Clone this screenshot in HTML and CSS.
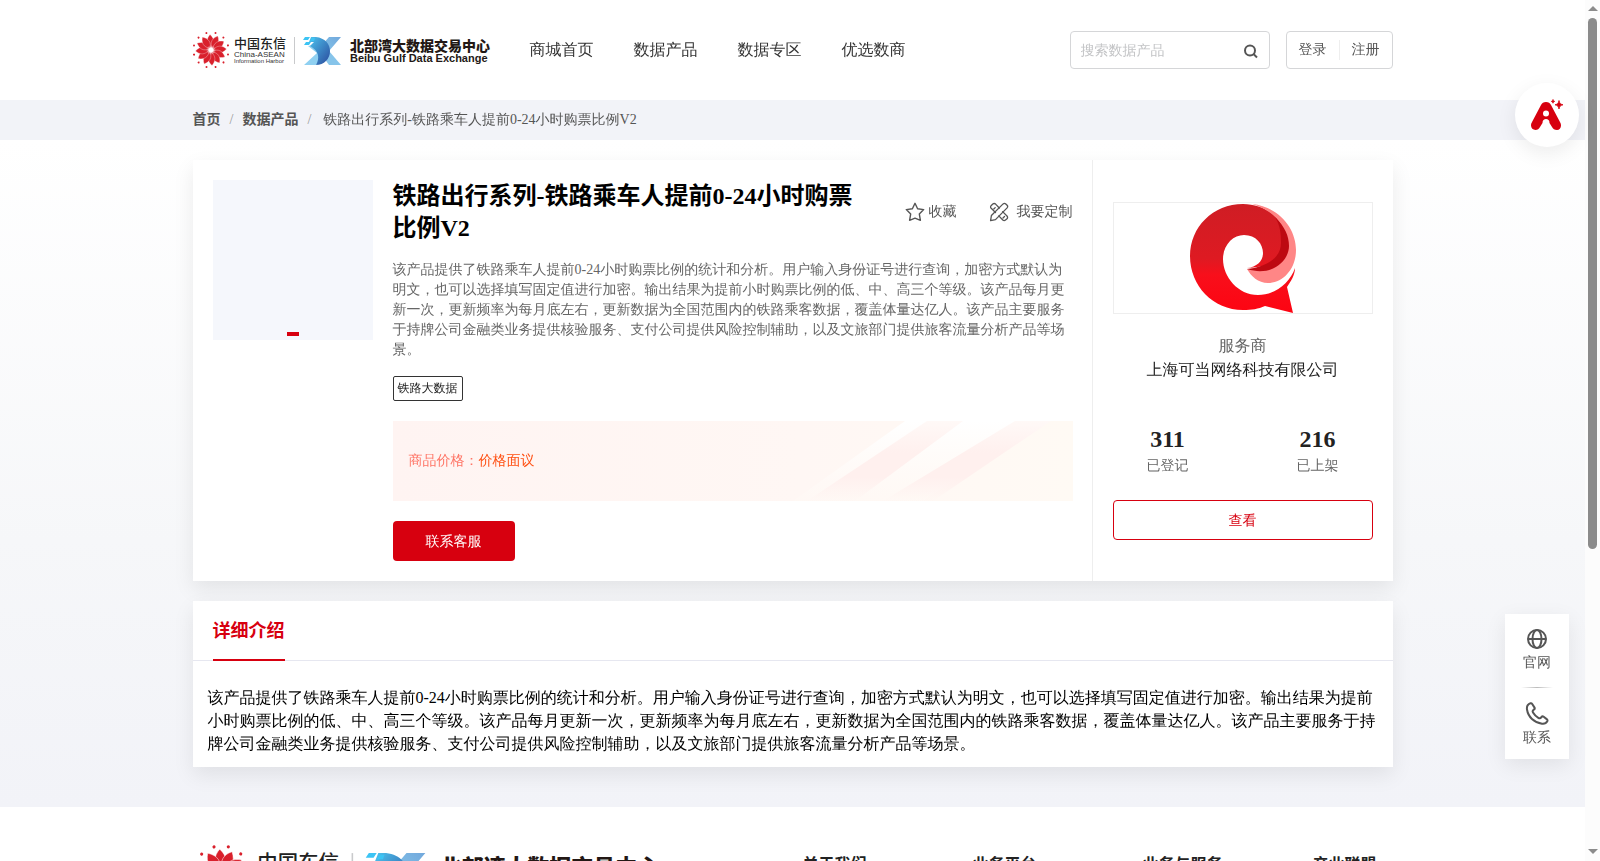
FILE: index.html
```
<!DOCTYPE html>
<html lang="zh-CN">
<head>
<meta charset="utf-8">
<title>铁路出行系列-铁路乘车人提前0-24小时购票比例V2</title>
<link rel="stylesheet" href="styles.css">
</head>
<body>
<svg class="defs" aria-hidden="true">
  <defs>
    <linearGradient id="dx-a" x1="0" y1="0" x2="1" y2="1"><stop offset="0" stop-color="#4cc3ee"/><stop offset="1" stop-color="#2b4a9c"/></linearGradient>
    <linearGradient id="dx-b" x1="0" y1="1" x2="1" y2="0"><stop offset="0" stop-color="#8fd6f2"/><stop offset="1" stop-color="#72a8dc"/></linearGradient>
    <radialGradient id="core"><stop offset="0" stop-color="#fff"/><stop offset="1" stop-color="#fff" stop-opacity="0"/></radialGradient>
    <g id="petal">
      <path d="M0 -2C-5 -6 -5 -11 -1 -15.500C4 -11 4 -6 0 -2Z" fill="#d9202c" stroke="#fff" stroke-width=".3"/>
      <circle cx="4.500" cy="-17" r="1" fill="#d9202c"/>
    </g>
    <symbol id="brand" viewBox="0 0 300 40">
      <g transform="translate(18 20)">
        <use href="#petal"/><use href="#petal" transform="rotate(30)"/><use href="#petal" transform="rotate(60)"/><use href="#petal" transform="rotate(90)"/><use href="#petal" transform="rotate(120)"/><use href="#petal" transform="rotate(150)"/><use href="#petal" transform="rotate(180)"/><use href="#petal" transform="rotate(210)"/><use href="#petal" transform="rotate(240)"/><use href="#petal" transform="rotate(270)"/><use href="#petal" transform="rotate(300)"/><use href="#petal" transform="rotate(330)"/>
        <circle r="5" fill="url(#core)"/>
      </g>
      <text class="brand-cn" x="41" y="18">中国东信</text>
      <text class="brand-en" x="41" y="27">China-ASEAN</text>
      <text class="brand-sub" x="41" y="33">Information Harbor</text>
      <path d="M101.500 7V34" stroke="#c9cacc"/>
      <path d="M148 7H136L129 15L131 21L124 28L121 34H124L136 21Z" fill="url(#dx-b)"/>
      <path d="M136 21L148 35H136L131 28Z" fill="#86c4ea"/>
      <path d="M115 16L124 23L111 35H123L131 25L126 14Z" fill="#8fd0f1"/>
      <path d="M118 7H123C132 8 137 14 137 21C137 29 131 35 123 35C127 28 126 21 117 16L121 12H116Z" fill="url(#dx-a)"/>
      <path d="M112 7H117L115 10H110ZM119 8H122L121 11H117ZM113 12H118L116 15H111Z" fill="#3cc4f4"/>
      <text class="brand-name" x="157" y="21">北部湾大数据交易中心</text>
      <text class="brand-name-en" x="157" y="32">Beibu Gulf Data Exchange</text>
    </symbol>
  </defs>
</svg>

<div class="viewport">
  <header class="header">
    <div class="container header-row">
      <a href="#" class="brand" aria-label="北部湾大数据交易中心"><svg class="brand-logo"><use href="#brand"/></svg></a>
      <nav class="nav">
        <a href="#">商城首页</a><a href="#">数据产品</a><a href="#">数据专区</a><a href="#">优选数商</a>
      </nav>
      <form class="search">
        <input type="search" placeholder="搜索数据产品" aria-label="搜索数据产品">
        <button type="button" aria-label="搜索"><svg width="16" height="16" viewBox="0 0 16 16" fill="none" stroke="#555" stroke-width="2"><circle cx="7" cy="7.500" r="5"/><path d="M10.500 11L14 14.500"/></svg></button>
      </form>
      <div class="account"><a href="#">登录</a><a href="#">注册</a></div>
    </div>
  </header>

  <div class="crumbs">
    <nav class="container crumbs-row" aria-label="面包屑">
      <a href="#">首页</a><span class="slash">/</span><a href="#">数据产品</a><span class="slash">/</span><span class="current">铁路出行系列-铁路乘车人提前0-24小时购票比例V2</span>
    </nav>
  </div>

  <main class="main">
    <section class="container card product">
      <div class="thumb"><i class="thumb-dot"></i></div>
      <div class="info">
        <div class="title-row">
          <h1>铁路出行系列-铁路乘车人提前0-24小时购票比例V2</h1>
          <div class="actions">
            <button type="button" class="fav"><svg width="20" height="20" viewBox="0 0 20 20" fill="none" stroke="#555" stroke-width="1.400" stroke-linejoin="round"><path d="M10 1.300L12.600 6.700L18.700 7.600L14.300 11.900L15.400 18.300L10 16.200L4.600 18.300L5.700 11.900L1.300 7.600L7.400 6.700Z"/></svg>收藏</button>
            <button type="button" class="custom"><svg width="20" height="20" viewBox="0 0 20 20" fill="none" stroke="#555" stroke-width="1.300" stroke-linejoin="round" stroke-linecap="round"><path d="M6.500 10.500L2.200 6.300C1.200 5.200 1.400 4.400 2.300 3.400L3.800 2C4.800 1.200 5.600 1.200 6.600 2.100L10.300 6M13.600 9.600L18 14C18.800 15 18.800 15.800 18 16.700L16.500 18C15.500 18.900 14.700 18.800 13.800 18L9.800 13.900"/><path d="M14.100 1.900C15 1.100 15.900 1.100 16.800 2L18.100 3.300C18.900 4.200 18.900 5 18.100 5.900L6.500 17.600L1.600 18.600L2.400 13.500ZM4.800 7L6.200 5.600M14 16L15.500 14.500"/></svg>我要定制</button>
          </div>
        </div>
        <p class="desc">该产品提供了铁路乘车人提前0-24小时购票比例的统计和分析。用户输入身份证号进行查询，加密方式默认为明文，也可以选择填写固定值进行加密。输出结果为提前小时购票比例的低、中、高三个等级。该产品每月更新一次，更新频率为每月底左右，更新数据为全国范围内的铁路乘客数据，覆盖体量达亿人。该产品主要服务于持牌公司金融类业务提供核验服务、支付公司提供风险控制辅助，以及文旅部门提供旅客流量分析产品等场景。</p>
        <span class="tag">铁路大数据</span>
        <div class="price">
          <svg class="price-art" viewBox="0 0 280 80" preserveAspectRatio="none" aria-hidden="true">
            <defs>
              <linearGradient id="st-w" x1="0" y1="1" x2="0" y2="0"><stop offset="0" stop-color="#fffaf6" stop-opacity=".4"/><stop offset="1" stop-color="#fff"/></linearGradient>
              <linearGradient id="st-p" x1="0" y1="1" x2="0" y2="0"><stop offset="0" stop-color="#fff0ee" stop-opacity="0"/><stop offset=".3" stop-color="#fff0ee"/><stop offset=".6" stop-color="#fff0ee"/><stop offset="1" stop-color="#fff9f7"/></linearGradient>
            </defs>
            <path d="M112 0H250L130 80H0Z" fill="url(#st-w)"/>
            <path d="M134 0H170L62 80H14Z" fill="url(#st-p)"/>
            <path d="M222 0H258L140 80H90Z" fill="url(#st-p)"/>
          </svg>
          <span class="price-label">商品价格：</span><span class="price-value">价格面议</span>
        </div>
        <button type="button" class="contact">联系客服</button>
      </div>
      <aside class="vendor">
        <div class="vendor-logo">
          <svg width="108" height="110" viewBox="0 0 108 110" aria-hidden="true">
            <defs><linearGradient id="q" x1="0" y1="0" x2="0" y2="1"><stop offset="0" stop-color="#cf1d24"/><stop offset=".5" stop-color="#de1a22"/><stop offset=".65" stop-color="#f80f1b"/><stop offset="1" stop-color="#fd0412"/></linearGradient></defs>
            <path fill="url(#q)" d="M54 1C24 1 1 24 1 53C1 83 24 107 54 107C63 107 69 106 76 103L104 110L98 84C102 78 106 72 106 65C101 80 86 92 69 92C49 92 34 74 34 56C34 42 44 32 55 32C67 32 74 41 74 50C74 58 68 64 58 65C81 64 100 55 100 40C100 20 79 1 54 1Z"/>
            <path fill="#ff8686" d="M63 1C91 4 107 26 107 47C107 66 94 80 79 80C69 80 62 73 58 66C81 68 96 55 96 38C96 22 86 8 63 1Z"/>
            <path fill="#bd0911" d="M86 14C96 24 100 33 100 43C100 58 83 74 58 66C77 64 92 55 92 40C92 30 91 22 86 14Z"/>
          </svg>
        </div>
        <p class="vendor-role">服务商</p>
        <p class="vendor-name">上海可当网络科技有限公司</p>
        <dl class="stats">
          <div><dd>311</dd><dt>已登记</dt></div>
          <div><dd>216</dd><dt>已上架</dt></div>
        </dl>
        <button type="button" class="view">查看</button>
      </aside>
    </section>

    <section class="container card detail">
      <div class="tabs"><button type="button" class="tab">详细介绍</button></div>
      <p class="detail-text">该产品提供了铁路乘车人提前0-24小时购票比例的统计和分析。用户输入身份证号进行查询，加密方式默认为明文，也可以选择填写固定值进行加密。输出结果为提前小时购票比例的低、中、高三个等级。该产品每月更新一次，更新频率为每月底左右，更新数据为全国范围内的铁路乘客数据，覆盖体量达亿人。该产品主要服务于持牌公司金融类业务提供核验服务、支付公司提供风险控制辅助，以及文旅部门提供旅客流量分析产品等场景。</p>
    </section>
  </main>

  <footer class="footer">
    <div class="container footer-row">
      <svg class="footer-logo" role="img" aria-label="北部湾大数据交易中心"><use href="#brand"/></svg>
      <div class="footer-cols"><h2>关于我们</h2><h2>业务平台</h2><h2>业务与服务</h2><h2>产业联盟</h2></div>
    </div>
  </footer>
</div>

<div class="scrollbar" aria-hidden="true"><i class="up"></i><i class="thumb-bar"></i><i class="space"></i><i class="down"></i></div>

<button type="button" class="ai" aria-label="智能助手">
  <svg width="32" height="32" viewBox="0 0 32 32" fill="#d7000f"><path fill-rule="evenodd" d="M15 3C17.500 3 19 4.300 20 6L29.500 24C31 27.500 29 31 26 31C23.500 31 22 29.700 21 28L18.500 24C18.500 21 17 20 15 20C13 20 11.500 21 11.500 24L9 28C8 30 6.500 31 4.500 31C1 31 -1 27.500 .5 24L10 6C11 4.300 12.500 3 15 3ZM15 11.500A3 3 0 1 0 15 17.500A3 3 0 1 0 15 11.500Z"/><path d="M28 1.500C28.700 4.500 29.200 5 32 5.800C29.200 6.600 28.700 7.200 28 10C27.300 7.200 26.800 6.600 24 5.800C26.800 5 27.300 4.500 28 1.500ZM22 .500C22.300 1.900 22.500 2.100 23.700 2.400C22.500 2.700 22.300 3 22 4.200C21.700 3 21.500 2.700 20.300 2.400C21.500 2.100 21.700 1.900 22 .500Z" stroke="#d7000f" stroke-width=".8"/></svg>
</button>

<aside class="side">
  <a href="#"><svg width="24" height="24" viewBox="0 0 24 24" fill="none" stroke="#555" stroke-width="2"><circle cx="12" cy="12" r="9"/><ellipse cx="12" cy="12" rx="4.500" ry="9"/><path d="M3 12H21"/></svg>官网</a>
  <i class="side-line"></i>
  <a href="#"><svg width="24" height="24" viewBox="0 0 24 24" fill="none" stroke="#555" stroke-width="2" stroke-linejoin="round"><path d="M5.500 1.300C3 2.100 1.500 4 2 7.500C3.200 15 9 20.500 17 21.700C19.500 22 21.500 20.800 22.300 19.300C22.700 18.500 22.500 17.900 22 17.400L18.700 14.800C17.900 14.200 17 14.300 16.400 15.100C15.500 16.400 14.500 16.500 13.300 15.800C11 14.500 9.300 12.700 8 10.500C7.300 9.300 7.700 8.400 8.800 7.700C9.700 7.100 9.900 6.200 9.400 5.400L7.200 2C6.800 1.400 6.200 1.100 5.500 1.300Z"/></svg>联系</a>
</aside>
</body>
</html>
```

FILE: styles.css
```
* { box-sizing: border-box; }
html, body { height: 100%; }
body {
  margin: 0;
  display: flex;
  overflow: hidden;
  background: #fff;
  color: #222;
  font-family: "Liberation Serif", "WenQuanYi Zen Hei", "Noto Sans CJK SC", serif;
  font-size: 14px;
  line-height: 20px;
}
h1, h2, p, dl, dd { margin: 0; }
a { color: inherit; text-decoration: none; }
button, input { font: inherit; color: inherit; background: none; border: 0; padding: 0; }
button { cursor: pointer; }
svg { display: block; flex: none; }
.defs { position: absolute; width: 0; height: 0; }
h1, h2, .tab, .crumbs-row a { font-family: "Liberation Serif", "Noto Sans CJK SC", serif; font-weight: bold; }

.viewport { flex: 1; min-width: 0; overflow-y: auto; scrollbar-width: none; }
.container { width: 100%; max-width: 1200px; margin: 0 auto; }

.header-row { display: flex; align-items: center; height: 100px; }
.brand { margin-right: 37px; }
.brand-logo { width: 300px; height: 40px; }
.brand-cn { font: 500 13px "Noto Sans CJK SC", sans-serif; fill: #222; }
.brand-en { font: 8px "Liberation Sans", sans-serif; fill: #333; }
.brand-sub { font: 6px "Liberation Sans", sans-serif; fill: #333; }
.brand-name { font: 900 14px "Noto Sans CJK SC", sans-serif; fill: #231815; }
.brand-name-en { font: bold 11px "Liberation Sans", sans-serif; fill: #231815; }
.nav { display: flex; gap: 40px; flex: 1; font-size: 16px; color: #333; white-space: nowrap; }
.search {
  display: flex; align-items: center;
  width: 200px; height: 38px; margin-right: 16px; padding: 2px 10px 0;
  border: 1px solid #d5d6d8; border-radius: 4px;
}
.search input { flex: 1; min-width: 0; outline: 0; }
.search input::placeholder { color: #c3c4c6; }
.account {
  display: flex; align-items: center;
  height: 38px; padding: 0 12px;
  border: 1px solid #d5d6d8; border-radius: 4px; color: #555;
}
.account a + a { margin-left: 12px; padding-left: 12px; border-left: 1px solid #eee; }

.crumbs { background: #f2f3f8; }
.crumbs-row { display: flex; align-items: center; height: 40px; color: #555; }
.slash { margin: 0 9px; color: #999; }
.current { margin-left: 3px; }

.main { padding: 20px 0 40px; background: linear-gradient(#fff, #f6f7f9 60%, #f2f3f8); }
.card { background: #fff; box-shadow: 0 8px 20px rgba(0, 0, 0, .08); }
.product { display: flex; align-items: stretch; }
.thumb {
  display: flex; align-items: flex-end; justify-content: center;
  width: 160px; height: 160px; margin: 20px; padding-bottom: 4px; background: #f5f7fc; flex: none;
}
.thumb-dot { width: 12px; height: 4px; background: #d7000f; }
.info { flex: 1; min-width: 0; padding: 20px 19px 20px 0; }
.title-row { display: flex; align-items: center; justify-content: space-between; }
h1 { width: 480px; font-size: 24px; line-height: 32px; color: #000; }
.actions { display: flex; gap: 32px; color: #555; white-space: nowrap; }
.actions button { display: flex; align-items: center; }
.fav { gap: 4px; }
.custom { gap: 8px; }
.desc { margin-top: 16px; color: #666; }
.tag {
  display: inline-block; margin-top: 16px; padding: 0 4px;
  border: 1px solid #333; border-radius: 2px; font-size: 12px; line-height: 23px; vertical-align: top;
}
.price {
  position: relative; display: flex; align-items: center;
  height: 80px; margin-top: 20px; padding: 0 16px;
  background: linear-gradient(90deg, #fff4f2, #fff7f4 60%, #fffaf4);
}
.price-art { position: absolute; top: 0; right: 0; width: 280px; height: 80px; }
.price-label { color: #ff7566; }
.price-value { color: #ff5013; }
.contact { height: 40px; margin-top: 20px; padding: 2px 33px 0; border-radius: 4px; background: #d7000f; color: #fff; vertical-align: top; }

.vendor { width: 301px; flex: none; padding: 42px 20px 20px; border-left: 1px solid #eee; text-align: center; }
.vendor-logo { display: flex; justify-content: center; height: 112px; border: 1px solid #eee; }
.vendor-role { margin-top: 20px; font-size: 16px; line-height: 24px; color: #666; }
.vendor-name { font-size: 16px; line-height: 24px; }
.stats { display: flex; justify-content: space-between; margin-top: 43px; }
.stats div { display: flex; flex-direction: column; width: 110px; }
.stats dd { font-size: 24px; line-height: 28px; font-weight: bold; }
.stats dt { line-height: 26px; color: #666; }
.view { width: 100%; height: 40px; margin-top: 21px; padding-top: 2px; border: 1px solid #d7000f; border-radius: 4px; color: #d7000f; }

.detail { margin-top: 20px; }
.tabs { display: flex; height: 60px; padding: 0 20px; border-bottom: 1px solid #e6e7f0; }
.tab { height: 60px; padding-top: 2px; border-bottom: 2px solid #d7000f; color: #d7000f; font-size: 18px; }
.detail-text { padding: 25px 14px 12px 15px; font-size: 16px; line-height: 23px; color: #000; }

.footer { background: #fff; }
.footer-row { display: flex; justify-content: space-between; padding: 35px 0 60px; }
.footer-logo { width: 471px; height: 63px; }
.footer-cols { display: grid; grid-template-columns: repeat(3, 170px) 80px; padding-top: 13px; }
h2 { font-size: 16px; line-height: 20px; }

.scrollbar { display: flex; flex-direction: column; align-items: center; width: 15px; flex: none; padding: 6px 0 7px; background: #fcfcfc; }
.up, .down { border: 5px solid transparent; }
.up { border-top: 0; border-bottom-color: #8b8b8b; }
.down { border-bottom: 0; border-top-color: #8b8b8b; }
.thumb-bar { width: 9px; flex: 531; margin-top: 7px; border-radius: 5px; background: #8b8b8b; }
.space { flex: 300; }

.ai {
  position: fixed; top: 83px; right: 21px;
  display: flex; align-items: center; justify-content: center;
  width: 64px; height: 64px; border-radius: 50%; background: #fff;
  box-shadow: 0 6px 20px rgba(0, 0, 0, .08);
}
.side {
  position: fixed; right: 31px; bottom: 102px;
  display: flex; flex-direction: column; align-items: center;
  width: 64px; padding: 13px 0 11px; background: #fff; color: #555;
  box-shadow: 0 6px 20px rgba(0, 0, 0, .08);
}
.side a { display: flex; flex-direction: column; align-items: center; gap: 2px; }
.side-line { width: 32px; height: 1px; margin: 14px 0; background: linear-gradient(90deg, transparent, #bbb, transparent); }
```
